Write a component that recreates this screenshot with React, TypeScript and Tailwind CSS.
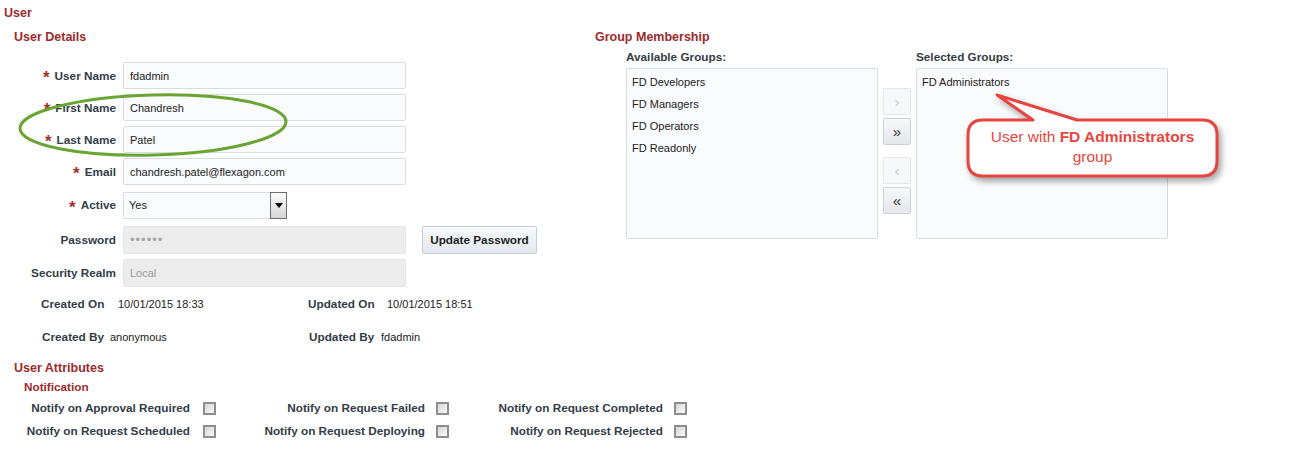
import React from 'react';

const label = 'text-[11.75px] font-bold leading-[14px] text-[#333d48]';
const heading = 'text-[12.5px] font-bold leading-[14px] text-[#9c2b2b]';

function Req() {
  return <span className="relative top-[2px] mr-[5px] text-[17px] font-bold leading-[11px] text-[#a3302b]">*</span>;
}

function FormRow({ text, required, className, children }: { text: string; required?: boolean; className: string; children: React.ReactNode }) {
  return (
    <div className={`flex items-center ${className}`}>
      <div className={`flex w-[116px] items-center justify-end ${label}`}>
        {required && <Req />}
        <span>{text}</span>
      </div>
      <div className="ml-[7px] flex items-center">{children}</div>
    </div>
  );
}

function TextBox({ value }: { value: string }) {
  return (
    <input
      readOnly
      defaultValue={value}
      className="h-[27px] w-[283px] rounded-[2px] border border-[#d8dde4] bg-[#fafbfd] px-[6px] text-[11px] text-[#222] outline-none"
    />
  );
}

function ShuttleButton({ glyph, disabled, className }: { glyph: string; disabled?: boolean; className: string }) {
  return (
    <div
      className={`flex h-[27px] w-[28px] items-center justify-center rounded-[2px] border text-[15px] leading-none ${className} ${
        disabled
          ? 'border-[#e3e6ea] bg-[#f7f8f9] text-[#c4c8cc]'
          : 'border-[#cdd2d8] bg-gradient-to-b from-[#f7f8fa] to-[#e4e7eb] text-[#333]'
      }`}
    >
      {glyph}
    </div>
  );
}

function CheckBox() {
  return <div className="h-[13px] w-[13px] border-2 border-[#8e8e8e] bg-gradient-to-br from-[#d6d6d6] to-[#fbfbfb]" />;
}

export default function App() {
  const available = ['FD Developers', 'FD Managers', 'FD Operators', 'FD Readonly'];

  return (
    <div className="relative h-[469px] w-[1309px] overflow-hidden bg-white pt-[6px] font-['Liberation_Sans',Arial,sans-serif] text-[11px] text-[#222]">
      <h1 className={`ml-[4px] ${heading}`}>User</h1>

      <div className="mt-[10px] flex">
        {/* User Details */}
        <div className="w-[595px]">
          <h2 className={`ml-[14px] ${heading}`}>User Details</h2>

          <FormRow text="User Name" required className="mt-[18px]">
            <TextBox value="fdadmin" />
          </FormRow>
          <FormRow text="First Name" required className="mt-[5px]">
            <TextBox value="Chandresh" />
          </FormRow>
          <FormRow text="Last Name" required className="mt-[5px]">
            <TextBox value="Patel" />
          </FormRow>
          <FormRow text="Email" required className="mt-[5px]">
            <TextBox value="chandresh.patel@flexagon.com" />
          </FormRow>
          <FormRow text="Active" required className="mt-[6px]">
            <div className="flex h-[28px] items-stretch pt-[1px]">
              <div className="flex w-[147px] items-center rounded-l-[2px] border border-r-0 border-[#d8dde4] bg-[#fafbfd] px-[5px]">Yes</div>
              <div className="flex w-[17px] items-center justify-center border border-[#6e6e6e] bg-gradient-to-b from-[#fbfbfb] to-[#d6d6d6]">
                <div className="h-0 w-0 border-x-[4px] border-t-[5px] border-x-transparent border-t-black" />
              </div>
            </div>
          </FormRow>
          <FormRow text="Password" className="mt-[7px]">
            <div className="flex h-[28px] w-[283px] items-center rounded-[2px] border border-[#e6e6e6] bg-[#ececec] px-[6px] text-[13px] tracking-[1px] text-[#a5a5a5]">
              ••••••
            </div>
            <div className="ml-[16px] flex h-[28px] w-[115px] items-center justify-center rounded-[2px] border border-[#c6cdd5] bg-gradient-to-b from-[#f7f9fb] to-[#e3e8ee] text-[11.75px] font-bold text-[#1f1f1f]">
              Update Password
            </div>
          </FormRow>
          <FormRow text="Security Realm" className="mt-[5px]">
            <div className="flex h-[28px] w-[283px] items-center rounded-[2px] border border-[#e6e6e6] bg-[#ececec] px-[6px] text-[#9a9a9a]">
              Local
            </div>
          </FormRow>

          <div className="mt-[10px] flex leading-[14px]">
            <span className={`ml-[41px] w-[77px] ${label}`}>Created On</span>
            <span className="w-[190px]">10/01/2015 18:33</span>
            <span className={`w-[79px] ${label}`}>Updated On</span>
            <span>10/01/2015 18:51</span>
          </div>
          <div className="mt-[19px] flex leading-[14px]">
            <span className={`ml-[42px] w-[68px] ${label}`}>Created By</span>
            <span className="w-[199px]">anonymous</span>
            <span className={`w-[72px] ${label}`}>Updated By</span>
            <span>fdadmin</span>
          </div>
        </div>

        {/* Group Membership */}
        <div>
          <h2 className={heading}>Group Membership</h2>
          <div className="ml-[31px] mt-[6px] flex">
            <div>
              <div className={label}>Available Groups:</div>
              <div className="mt-[4px] h-[171px] w-[252px] rounded-[2px] border border-[#d8dde4] bg-[#fafbfd] px-[5px] pt-[2px]">
                {available.map((g) => (
                  <div key={g} className="h-[22px] leading-[22px]">
                    {g}
                  </div>
                ))}
              </div>
            </div>
            <div className="ml-[5px] flex flex-col pt-[38px]">
              <ShuttleButton glyph="›" disabled className="" />
              <ShuttleButton glyph="»" className="mt-[3px]" />
              <ShuttleButton glyph="‹" disabled className="mt-[12px]" />
              <ShuttleButton glyph="«" className="mt-[3px]" />
            </div>
            <div className="ml-[5px]">
              <div className={label}>Selected Groups:</div>
              <div className="mt-[4px] h-[171px] w-[252px] rounded-[2px] border border-[#d8dde4] bg-[#fafbfd] px-[5px] pt-[2px]">
                <div className="h-[22px] leading-[22px]">FD Administrators</div>
              </div>
            </div>
          </div>
        </div>
      </div>

      {/* User Attributes */}
      <h2 className={`ml-[14px] mt-[17px] ${heading}`}>User Attributes</h2>
      <h3 className="ml-[24px] mt-[5px] text-[11.75px] font-bold leading-[14px] text-[#9c2b2b]">Notification</h3>
      <div className="mt-[6px] flex h-[16px] items-center">
        <span className={`w-[190px] text-right ${label}`}>Notify on Approval Required</span>
        <div className="ml-[13px]"><CheckBox /></div>
        <span className={`w-[209px] text-right ${label}`}>Notify on Request Failed</span>
        <div className="ml-[11px]"><CheckBox /></div>
        <span className={`w-[214px] text-right ${label}`}>Notify on Request Completed</span>
        <div className="ml-[11px]"><CheckBox /></div>
      </div>
      <div className="mt-[7px] flex h-[16px] items-center">
        <span className={`w-[190px] text-right ${label}`}>Notify on Request Scheduled</span>
        <div className="ml-[13px]"><CheckBox /></div>
        <span className={`w-[209px] text-right ${label}`}>Notify on Request Deploying</span>
        <div className="ml-[11px]"><CheckBox /></div>
        <span className={`w-[214px] text-right ${label}`}>Notify on Request Rejected</span>
        <div className="ml-[11px]"><CheckBox /></div>
      </div>

      {/* Green annotation ellipse */}
      <svg className="pointer-events-none absolute left-0 top-[80px]" width="300" height="90">
        <ellipse cx="153" cy="45" rx="133" ry="30" fill="none" stroke="#6aa533" strokeWidth="3" transform="rotate(-1.5 153 45)" />
      </svg>

      {/* Red callout */}
      <div className="pointer-events-none absolute left-[960px] top-[90px] h-[95px] w-[265px]">
        <svg className="absolute inset-0 drop-shadow-[3px_4px_3px_rgba(0,0,0,0.35)]" width="265" height="95">
          <path
            d="M23 30 L73 30 L37 5 L117 30 L242 30 Q257 30 257 45 L257 71 Q257 86 242 86 L23 86 Q8 86 8 71 L8 45 Q8 30 23 30 Z"
            fill="#ffffff"
            stroke="#e5443f"
            strokeWidth="3"
            strokeLinejoin="round"
          />
        </svg>
        <div className="absolute left-[8px] top-[37px] w-[249px] text-center text-[15.5px] leading-[20px] text-[#e8453f]">
          User with <span className="font-bold">FD Administrators</span>
          <br />
          group
        </div>
      </div>
    </div>
  );
}
